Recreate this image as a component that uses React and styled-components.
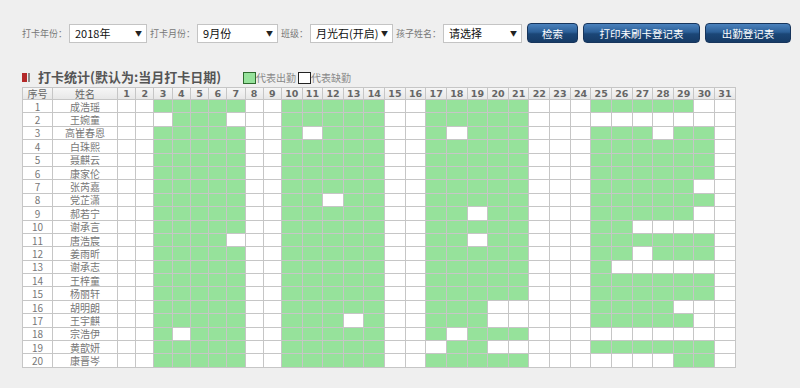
import React from 'react';
import styled, { createGlobalStyle } from 'styled-components';

const GlobalStyle = createGlobalStyle`
  body {
    margin: 0;
    background: #efefef;
    font-family: "Liberation Sans", "Noto Sans CJK SC", sans-serif;
  }
`;

const CJK = '"Noto Sans CJK SC", "Liberation Sans", sans-serif';

const Page = styled.div`
  padding: 23px 0 0 22px;
`;

const Toolbar = styled.div`
  display: flex;
  align-items: center;
  height: 20px;
`;

const Label = styled.span`
  font-family: ${CJK};
  font-size: 9px;
  color: #777;
  margin: 0 2px 0 ${(p) => (p.first ? 0 : 3)}px;
  white-space: nowrap;
`;

const FakeSelect = styled.div`
  box-sizing: border-box;
  width: ${(p) => p.w}px;
  height: 19px;
  display: flex;
  align-items: center;
  justify-content: space-between;
  padding: 0 4px 0 5px;
  background: #fff;
  border: 1px solid #c4c4c4;
  font-family: ${CJK};
  font-size: 11px;
  color: #111;
  white-space: nowrap;

  .arrow {
    font-size: 7px;
    color: #222;
  }
`;

const Button = styled.button`
  box-sizing: border-box;
  width: ${(p) => p.w}px;
  height: 20px;
  margin-left: 5px;
  padding: 0;
  border: 1px solid #17355c;
  border-radius: 4px;
  background: linear-gradient(#4b82bd 0%, #2c5f97 45%, #1b4677 55%, #163b66 100%);
  color: #fff;
  font-family: ${CJK};
  font-size: 10.5px;
  cursor: pointer;
`;

const TitleRow = styled.div`
  display: flex;
  align-items: flex-end;
  margin-top: 23px;
  height: 21px;
`;

const TitleMark = styled.span`
  display: inline-flex;
  align-self: center;
  margin: 2px 8px 0 0;

  &::before {
    content: '';
    width: 5px;
    height: 9px;
    background: #b3292a;
  }
  &::after {
    content: '';
    width: 2px;
    height: 9px;
    margin-left: 1px;
    background: #8a8a8a;
  }
`;

const Title = styled.h2`
  margin: 0;
  font-family: ${CJK};
  font-size: 13px;
  font-weight: bold;
  color: #555;
  line-height: 21px;
`;

const Legend = styled.div`
  display: flex;
  align-items: center;
  margin: 0 0 2px 22px;
  font-family: ${CJK};
  font-size: 10px;
  color: #888;
`;

const Swatch = styled.span`
  box-sizing: border-box;
  width: 13px;
  height: 12px;
  border: 1px solid ${(p) => (p.on ? '#2f6b2f' : '#222')};
  background: ${(p) => (p.on ? '#96e29b' : '#fff')};
  margin-left: ${(p) => (p.on ? 0 : 2)}px;
`;

const Table = styled.table`
  border-collapse: collapse;
  table-layout: fixed;
  width: 713px;
  background: #fff;
  font-family: ${CJK};
  color: #777;

  th, td {
    border: 1px solid #c6c6c6;
    padding: 0;
    text-align: center;
    overflow: hidden;
    white-space: nowrap;
  }
`;

const HeadRow = styled.tr`
  height: 12px;
  background: linear-gradient(#f6f6f6, #e6e6e6);
  line-height: 10px;
`;

const HeadCell = styled.th`
  font-weight: ${(p) => (p.num ? 'bold' : 'normal')};
  font-family: ${(p) => (p.num ? '"DejaVu Sans", sans-serif' : CJK)};
  font-size: ${(p) => (p.num ? 9.5 : 10)}px;
  color: #666;
`;

const BodyRow = styled.tr`
  height: 13.4px;
  line-height: 11px;
`;

const Cell = styled.td`
  background: ${(p) => (p.on ? '#96e29b' : '#fff')};
  font-size: 10px;
`;

const WORK = [3, 4, 5, 6, 7, 10, 11, 12, 13, 14, 17, 18, 19, 20, 21, 25, 26, 27, 28, 29, 30];

const students = [
  ['成浩瑶', [30]],
  ['王婉童', [3, 7, 25, 26, 27, 28, 29, 30]],
  ['高崔春恩', [11, 18, 28]],
  ['白珠熙', []],
  ['聂麒云', []],
  ['康家伦', []],
  ['张芮嘉', [30]],
  ['党芷潇', [12]],
  ['郝若宁', [19, 30]],
  ['谢承言', [27, 28, 29, 30]],
  ['唐浩宸', [7, 19]],
  ['姜雨昕', [27]],
  ['谢承志', [26, 27, 28, 29, 30]],
  ['王梓童', []],
  ['杨丽轩', []],
  ['胡明朗', [20, 21, 29, 30]],
  ['王宇麒', [13, 20, 21, 30]],
  ['宗浩伊', [4, 18, 25, 26, 27, 28, 29, 30]],
  ['黄歆妍', [17, 20, 21]],
  ['康晋岑', [25, 26, 27, 28]],
];

const days = Array.from({ length: 31 }, (_, i) => i + 1);

const App = () => (
  <Page>
    <GlobalStyle />
    <Toolbar>
      <Label first>打卡年份：</Label>
      <FakeSelect w={78}>2018年<span className="arrow">▼</span></FakeSelect>
      <Label>打卡月份：</Label>
      <FakeSelect w={81}>9月份<span className="arrow">▼</span></FakeSelect>
      <Label>班级：</Label>
      <FakeSelect w={83}>月光石(开启)<span className="arrow">▼</span></FakeSelect>
      <Label>孩子姓名：</Label>
      <FakeSelect w={79}>请选择<span className="arrow">▼</span></FakeSelect>
      <Button w={51}>检索</Button>
      <Button w={117}>打印未刷卡登记表</Button>
      <Button w={86}>出勤登记表</Button>
    </Toolbar>

    <TitleRow>
      <TitleMark />
      <Title>打卡统计(默认为:当月打卡日期)</Title>
      <Legend>
        <Swatch on />代表出勤
        <Swatch />代表缺勤
      </Legend>
    </TitleRow>

    <Table>
      <colgroup>
        <col style={{ width: 30 }} />
        <col style={{ width: 65 }} />
        {days.map((d) => (
          <col key={d} style={{ width: d < 10 ? 18.22 : 20.64 }} />
        ))}
      </colgroup>
      <thead>
        <HeadRow>
          <HeadCell>序号</HeadCell>
          <HeadCell>姓名</HeadCell>
          {days.map((d) => (
            <HeadCell key={d} num>{d}</HeadCell>
          ))}
        </HeadRow>
      </thead>
      <tbody>
        {students.map(([name, absent], i) => (
          <BodyRow key={name}>
            <Cell>{i + 1}</Cell>
            <Cell>{name}</Cell>
            {days.map((d) => (
              <Cell key={d} on={WORK.includes(d) && !absent.includes(d)} />
            ))}
          </BodyRow>
        ))}
      </tbody>
    </Table>
  </Page>
);

export default App;
